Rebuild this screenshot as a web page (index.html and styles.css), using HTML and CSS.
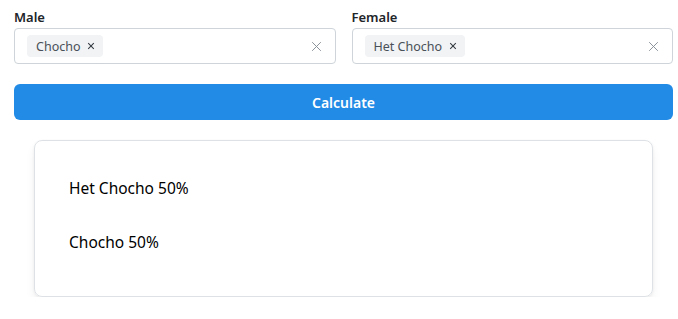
FILE: index.html
```html
<!DOCTYPE html>
<html>
  <head>
    <meta charset="utf-8">
    <link rel="stylesheet" href="styles.css">
    <title>Calculator</title>
  </head>
  <body>
    <div class="page">
      <div class="parents">
        <div class="field">
          <label class="field-label">Male</label>
          <div class="multi">
            <div class="pills">
              <span class="pill">Chocho
                <svg class="pill-x" viewBox="0 0 15 15" width="12" height="12"><path d="M4 4l7 7M11 4l-7 7" stroke="currentColor" stroke-width="1.3" fill="none"/></svg>
              </span>
            </div>
            <svg class="clear" viewBox="0 0 15 15" width="13" height="13"><path d="M2.5 2.5l10 10M12.5 2.5l-10 10" stroke="currentColor" stroke-width="1.1" fill="none"/></svg>
          </div>
        </div>
        <div class="field">
          <label class="field-label">Female</label>
          <div class="multi">
            <div class="pills">
              <span class="pill">Het Chocho
                <svg class="pill-x" viewBox="0 0 15 15" width="12" height="12"><path d="M4 4l7 7M11 4l-7 7" stroke="currentColor" stroke-width="1.3" fill="none"/></svg>
              </span>
            </div>
            <svg class="clear" viewBox="0 0 15 15" width="13" height="13"><path d="M2.5 2.5l10 10M12.5 2.5l-10 10" stroke="currentColor" stroke-width="1.1" fill="none"/></svg>
          </div>
        </div>
      </div>

      <button class="calc">Calculate</button>

      <div class="result">
        <p>Het Chocho 50%</p>
        <p>Chocho 50%</p>
      </div>
    </div>
  </body>
</html>
```

FILE: styles.css
```css
body {
  margin: 0;
  font-family: "Noto Sans", "Open Sans", sans-serif;
  color: #000;
  background: #fff;
}

.page {
  width: 659px;
  padding: 6px 0 0 14px;
}

.parents {
  display: grid;
  grid-template-columns: 1fr 1fr;
  gap: 16px;
}

.field-label {
  display: block;
  font-size: 13px;
  font-weight: 600;
  line-height: 22px;
  color: #212529;
}

.multi {
  height: 36px;
  box-sizing: border-box;
  border: 1px solid #ced4da;
  border-radius: 4px;
  display: flex;
  align-items: center;
  padding: 0 12px;
}

.pills {
  flex: 1;
  display: flex;
}

.pill {
  display: inline-flex;
  align-items: center;
  gap: 5px;
  height: 22px;
  padding: 0 6px 0 9px;
  background: #f1f3f5;
  border-radius: 4px;
  font-size: 12.5px;
  color: #495057;
}

.pill-x {
  color: #343a40;
}

.clear {
  color: #868e96;
}

.calc {
  display: block;
  width: 100%;
  height: 36px;
  margin-top: 20px;
  border: none;
  border-radius: 6px;
  background: #228be6;
  color: #fff;
  font-family: inherit;
  font-size: 14px;
  font-weight: 600;
}

.result {
  margin: 20px 20px 0;
  padding: 36px 34px 43px;
  display: flex;
  flex-direction: column;
  gap: 32px;
  border: 1px solid #dee2e6;
  border-radius: 8px;
  box-shadow: 0 1px 3px rgba(0, 0, 0, 0.06), 0 6px 12px -2px rgba(0, 0, 0, 0.08);
}

.result p {
  margin: 0;
  font-size: 15.5px;
  line-height: 22px;
}
```
